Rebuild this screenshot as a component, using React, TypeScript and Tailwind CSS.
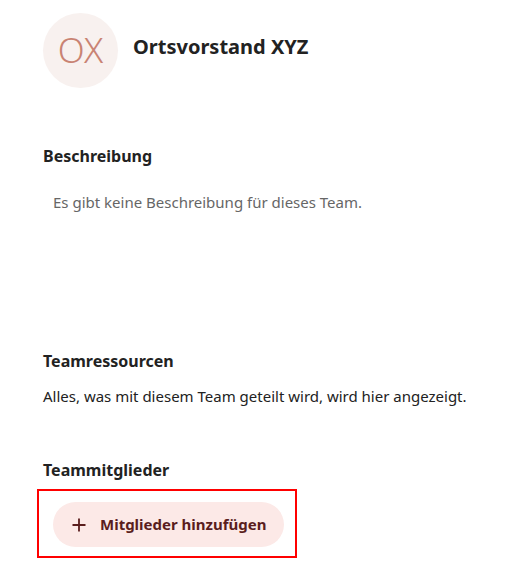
import React from "react";

const Section = ({ title, children }: { title: string; children?: React.ReactNode }) => (
  <section>
    <h2 className="text-[16px] font-bold leading-[22px] text-[#222]">{title}</h2>
    {children}
  </section>
);

export default function App() {
  return (
    <div
      className="min-h-[571px] w-[509px] bg-white pl-[43px] pr-[20px] text-[#222]"
      style={{ fontFamily: '"Noto Sans", "Open Sans", sans-serif' }}
    >
      <header className="flex items-start gap-[15px] pt-[13px]">
        <div className="flex size-[75px] shrink-0 items-center justify-center rounded-full bg-[#f8f1ef] text-[35px] font-light text-[#c98373]">
          OX
        </div>
        <h1 className="pt-[20px] text-[20px] font-bold leading-[28px] text-[#222]">
          Ortsvorstand XYZ
        </h1>
      </header>

      <div className="mt-[57px]">
        <Section title="Beschreibung">
          <p className="mt-[24px] pl-[10px] text-[15px] leading-[22px] text-[#666]">
            Es gibt keine Beschreibung für dieses Team.
          </p>
        </Section>
      </div>

      <div className="mt-[137px]">
        <Section title="Teamressourcen">
          <p className="mt-[13px] text-[15px] leading-[22px] text-[#222]">
            Alles, was mit diesem Team geteilt wird, wird hier angezeigt.
          </p>
        </Section>
      </div>

      <div className="mt-[52px]">
        <Section title="Teammitglieder">
          <div className="-ml-[6px] mt-[8px] w-[260px] border-2 border-[#ff0000] pb-[9px] pl-[14px] pt-[11px]">
            <button className="flex h-[45px] w-[231px] items-center gap-[14px] rounded-full bg-[#fce9e7] pl-[19px] text-[15px] font-bold text-[#5a1d1d]">
              <svg width="14" height="14" viewBox="0 0 14 14" fill="none" stroke="currentColor" strokeWidth="1.8">
                <path d="M7 0.5v13M0.5 7h13" />
              </svg>
              Mitglieder hinzufügen
            </button>
          </div>
        </Section>
      </div>
    </div>
  );
}
